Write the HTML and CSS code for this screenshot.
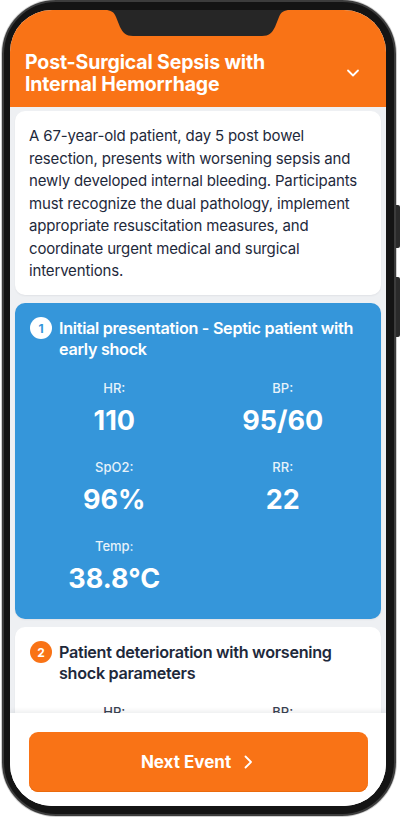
FILE: index.html
```html
<!DOCTYPE html>
<html lang="en">
<head>
<meta charset="utf-8">
<title>Post-Surgical Sepsis with Internal Hemorrhage</title>
<link rel="stylesheet" href="styles.css">
</head>
<body>
<div class="phone">
  <span class="side-btn side-btn-1"></span>
  <span class="side-btn side-btn-2"></span>
  <div class="screen">
    <svg class="notch" width="185" height="27" viewBox="0 0 185 27" aria-hidden="true">
      <path d="M0 0 H185 C179 0 176 2 174 7 L170 17 C167 23 164 26 157 26 H28 C21 26 18 23 15 17 L11 7 C9 2 6 0 0 0 Z" fill="#262626"/>
    </svg>
    <header class="header">
      <h1 class="title">Post-Surgical Sepsis with Internal Hemorrhage</h1>
      <svg class="chev-down" width="14" height="14" viewBox="0 0 14 14" aria-hidden="true">
        <path d="M2 4.5 L7 9.5 L12 4.5" fill="none" stroke="#fff" stroke-width="1.8" stroke-linecap="round" stroke-linejoin="round"/>
      </svg>
    </header>
    <main class="content">
      <section class="card desc">
        A 67-year-old patient, day 5 post bowel resection, presents with worsening sepsis and newly developed internal bleeding. Participants must recognize the dual pathology, implement appropriate resuscitation measures, and coordinate urgent medical and surgical interventions.
      </section>
      <section class="card event active">
        <div class="event-head">
          <span class="badge">1</span>
          <h2 class="event-title">Initial presentation - Septic patient with early shock</h2>
        </div>
        <div class="vitals">
          <div class="vital"><div class="v-label">HR:</div><div class="v-value">110</div></div>
          <div class="vital"><div class="v-label">BP:</div><div class="v-value">95/60</div></div>
          <div class="vital"><div class="v-label">SpO2:</div><div class="v-value">96%</div></div>
          <div class="vital"><div class="v-label">RR:</div><div class="v-value">22</div></div>
          <div class="vital"><div class="v-label">Temp:</div><div class="v-value">38.8°C</div></div>
        </div>
      </section>
      <section class="card event">
        <div class="event-head">
          <span class="badge">2</span>
          <h2 class="event-title">Patient deterioration with worsening shock parameters</h2>
        </div>
        <div class="vitals">
          <div class="vital"><div class="v-label">HR:</div></div>
          <div class="vital"><div class="v-label">BP:</div></div>
        </div>
      </section>
    </main>
    <footer class="footer">
      <button class="next-btn" type="button">
        <span>Next Event</span>
        <svg width="16" height="16" viewBox="0 0 16 16" aria-hidden="true">
          <path d="M5.5 2.5 L11 8 L5.5 13.5" fill="none" stroke="#fff" stroke-width="1.8" stroke-linecap="round" stroke-linejoin="round"/>
        </svg>
      </button>
    </footer>
  </div>
</div>
</body>
</html>
```
FILE: styles.css
```css
* { box-sizing: border-box; }

html, body {
  margin: 0;
  padding: 0;
  background: #ffffff;
}

body {
  font-family: Inter, "Noto Sans", "Liberation Sans", sans-serif;
  width: 400px;
  height: 817px;
  overflow: hidden;
}

.phone {
  position: relative;
  margin-left: 2px;
  width: 394px;
  height: 816px;
  padding: 8px 8px 8px 6px;
  border: 2px solid #3c3c3c;
  border-radius: 54px;
  background: #141414;
  box-shadow: 0 0 0 1px #cfcfcf;
}

.side-btn {
  position: absolute;
  right: -6px;
  width: 4px;
  background: #2a2a2a;
  border-radius: 0 2px 2px 0;
}
.side-btn-1 { top: 203px; height: 43px; }
.side-btn-2 { top: 275px; height: 60px; }

.screen {
  position: relative;
  width: 376px;
  height: 796px;
  border-radius: 42px;
  overflow: hidden;
  display: flex;
  flex-direction: column;
  background: #ffffff;
}

.notch {
  position: absolute;
  top: 0;
  left: 95px;
  z-index: 3;
}

.header {
  background: #f97316;
  padding: 41px 26px 12px 15px;
  display: flex;
  align-items: center;
  justify-content: space-between;
  flex: none;
}

.title {
  margin: 0;
  max-width: 300px;
  color: #ffffff;
  font-size: 19.5px;
  line-height: 22px;
  font-weight: 700;
  letter-spacing: -0.15px;
}

.chev-down { flex: none; }

.content {
  flex: 1;
  min-height: 0;
  overflow: hidden;
  background: #eef0f3;
  padding: 4px 5px 0 5px;
  display: flex;
  flex-direction: column;
  gap: 8px;
}

.card {
  background: #ffffff;
  border-radius: 10px;
  box-shadow: 0 1px 2px rgba(15, 23, 42, 0.06);
  flex: none;
}

.desc {
  padding: 14px 14px 12px;
  font-size: 15px;
  line-height: 22.5px;
  letter-spacing: -0.15px;
  color: #1e293b;
}

.event {
  padding: 15px 14px 23px 15px;
  color: #1e293b;
}

.event.active {
  background: #3596da;
  color: #ffffff;
}

.event-head {
  display: flex;
  align-items: flex-start;
  gap: 7px;
}

.badge {
  flex: none;
  width: 22px;
  height: 22px;
  margin-top: -0.5px;
  border-radius: 50%;
  background: #f97316;
  color: #ffffff;
  font-size: 12px;
  font-weight: 700;
  display: flex;
  align-items: center;
  justify-content: center;
}

.event.active .badge {
  background: #ffffff;
  color: #3596da;
}

.event-title {
  margin: 0;
  font-size: 16.2px;
  line-height: 21px;
  font-weight: 600;
  letter-spacing: -0.3px;
}

.vitals {
  margin-top: 20px;
  display: grid;
  grid-template-columns: 1fr 1fr;
  row-gap: 21px;
  text-align: center;
}

.v-label {
  font-size: 13px;
  line-height: 16px;
  font-weight: 500;
  margin-bottom: 8px;
  opacity: 0.88;
}

.v-value {
  font-size: 27px;
  line-height: 34px;
  font-weight: 700;
}

.footer {
  flex: none;
  position: relative;
  z-index: 2;
  background: #ffffff;
  padding: 19px 18px 14px 19px;
  box-shadow: 0 -2px 5px rgba(15, 23, 42, 0.08);
}

.next-btn {
  width: 100%;
  height: 60px;
  border: none;
  border-radius: 9px;
  background: #f97316;
  box-shadow: inset 0 -1px 0 #ea6a0c;
  color: #ffffff;
  font-family: inherit;
  font-size: 17px;
  font-weight: 700;
  display: flex;
  align-items: center;
  justify-content: center;
  gap: 9px;
  cursor: pointer;
}
```
